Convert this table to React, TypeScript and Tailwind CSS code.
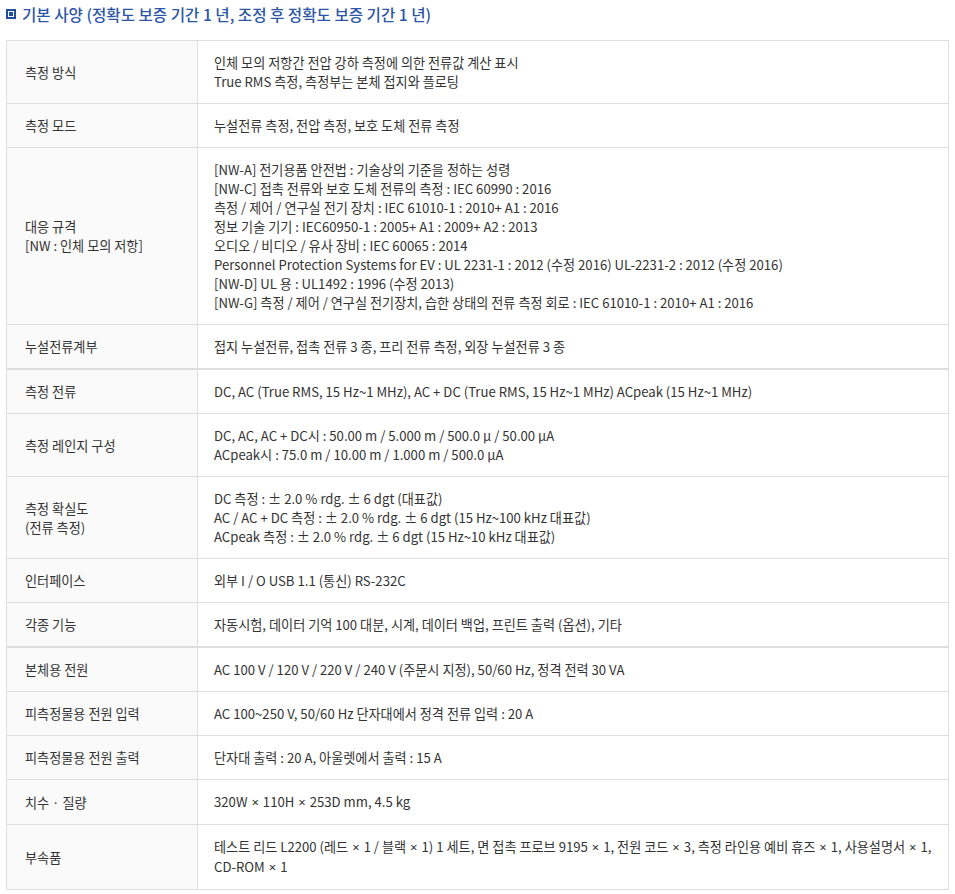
import React from 'react';

type Row = { label: string[]; value: string[]; thick?: boolean };

const rows: Row[] = [
    {
        label: ['측정 방식'],
        value: ['인체 모의 저항간 전압 강하 측정에 의한 전류값 계산 표시', 'True RMS 측정, 측정부는 본체 접지와 플로팅'],
    },
    { label: ['측정 모드'], value: ['누설전류 측정, 전압 측정, 보호 도체 전류 측정'] },
    {
        label: ['대응 규격', '[NW : 인체 모의 저항]'],
        value: [
            '[NW-A] 전기용품 안전법 : 기술상의 기준을 정하는 성령',
            '[NW-C] 접촉 전류와 보호 도체 전류의 측정 : IEC 60990 : 2016',
            '측정 / 제어 / 연구실 전기 장치 : IEC 61010-1 : 2010+ A1 : 2016',
            '정보 기술 기기 : IEC60950-1 : 2005+ A1 : 2009+ A2 : 2013',
            '오디오 / 비디오 / 유사 장비 : IEC 60065 : 2014',
            'Personnel Protection Systems for EV : UL 2231-1 : 2012 (수정 2016) UL-2231-2 : 2012 (수정 2016)',
            '[NW-D] UL 용 : UL1492 : 1996 (수정 2013)',
            '[NW-G] 측정 / 제어 / 연구실 전기장치, 습한 상태의 전류 측정 회로 : IEC 61010-1 : 2010+ A1 : 2016',
        ],
    },
    { label: ['누설전류계부'], value: ['접지 누설전류, 접촉 전류 3 종, 프리 전류 측정, 외장 누설전류 3 종'] },
    {
        label: ['측정 전류'],
        value: ['DC, AC (True RMS, 15 Hz~1 MHz), AC + DC (True RMS, 15 Hz~1 MHz) ACpeak (15 Hz~1 MHz)'],
        thick: true,
    },
    {
        label: ['측정 레인지 구성'],
        value: ['DC, AC, AC + DC시 : 50.00 m / 5.000 m / 500.0 μ / 50.00 μA', 'ACpeak시 : 75.0 m / 10.00 m / 1.000 m / 500.0 μA'],
    },
    {
        label: ['측정 확실도', '(전류 측정)'],
        value: [
            'DC 측정 : ± 2.0 % rdg. ± 6 dgt (대표값)',
            'AC / AC + DC 측정 : ± 2.0 % rdg. ± 6 dgt (15 Hz~100 kHz 대표값)',
            'ACpeak 측정 : ± 2.0 % rdg. ± 6 dgt (15 Hz~10 kHz 대표값)',
        ],
    },
    { label: ['인터페이스'], value: ['외부 I / O USB 1.1 (통신) RS-232C'] },
    { label: ['각종 기능'], value: ['자동시험, 데이터 기억 100 대분, 시계, 데이터 백업, 프린트 출력 (옵션), 기타'] },
    {
        label: ['본체용 전원'],
        value: ['AC 100 V / 120 V / 220 V / 240 V (주문시 지정), 50/60 Hz, 정격 전력 30 VA'],
        thick: true,
    },
    { label: ['피측정물용 전원 입력'], value: ['AC 100~250 V, 50/60 Hz 단자대에서 정격 전류 입력 : 20 A'] },
    { label: ['피측정물용 전원 출력'], value: ['단자대 출력 : 20 A, 아울렛에서 출력 : 15 A'] },
    { label: ['치수 · 질량'], value: ['320W × 110H × 253D mm, 4.5 kg'] },
    {
        label: ['부속품'],
        value: [
            '테스트 리드 L2200 (레드 × 1 / 블랙 × 1) 1 세트, 면 접촉 프로브 9195 × 1, 전원 코드 × 3, 측정 라인용 예비 휴즈 × 1, 사용설명서 × 1,',
            'CD-ROM × 1',
        ],
    },
];

// the × sign is narrow in the reference, so set it in a latin face
function Line({ text }: { text: string }) {
    const parts = text.split('×');
    return (
        <div>
            {parts.map((p, i) => (
                <React.Fragment key={i}>
                    {i > 0 && <span className="px-[1px] font-['Noto_Sans',sans-serif]">×</span>}
                    {p}
                </React.Fragment>
            ))}
        </div>
    );
}

export default function App() {
    return (
        <div className="bg-white px-[6px] pt-[4px] pb-2 text-[13.15px] leading-[19px] text-[#333] font-['Noto_Sans_CJK_KR','Noto_Sans',sans-serif]">
            {/* Section title */}
            <h3 className="flex items-center gap-[6px] h-[20px] text-[15.6px] font-medium text-[#2b55a5]">
                <span className="w-[10px] h-[10px] border-2 border-[#1f4e9c] bg-white flex items-center justify-center">
                    <span className="w-[4px] h-[4px] bg-[#1f4e9c]" />
                </span>
                기본 사양 (정확도 보증 기간 1 년, 조정 후 정확도 보증 기간 1 년)
            </h3>

            <table className="mt-[16px] w-full border-collapse border border-[#dedede]">
                <tbody>
                    {rows.map((row, idx) => (
                        <tr
                            key={idx}
                            className={row.thick ? 'border-t-2 border-[#dedede]' : 'border-t border-[#dedede]'}
                        >
                            <th className="w-[191px] bg-[#fafafa] border-r border-[#dedede] pl-[18px] pr-2 py-3 text-left font-normal align-middle">
                                {row.label.map((l, i) => (
                                    <div key={i}>{l}</div>
                                ))}
                            </th>
                            <td className="pl-4 pr-1 py-3 align-middle">
                                {row.value.map((v, i) => (
                                    <Line key={i} text={v} />
                                ))}
                            </td>
                        </tr>
                    ))}
                </tbody>
            </table>
        </div>
    );
}
